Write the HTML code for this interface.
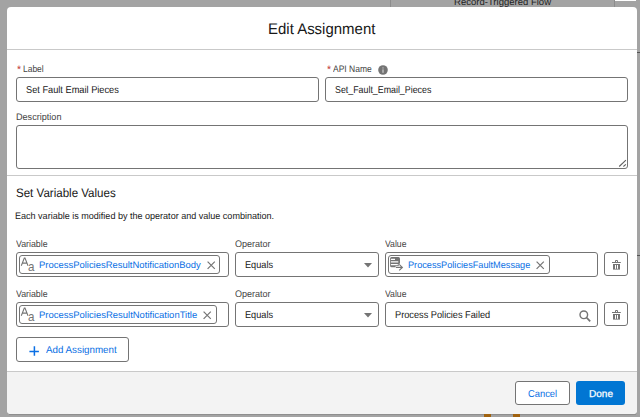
<!DOCTYPE html>
<html><head><meta charset="utf-8">
<style>
*{box-sizing:border-box;margin:0;padding:0}
html,body{width:640px;height:417px;overflow:hidden;background:#a3a3a3;font-family:"Liberation Sans",sans-serif;color:#181818;position:relative}
.a{position:absolute;white-space:nowrap;line-height:1}
.t{position:absolute;white-space:nowrap;line-height:1;transform-origin:0 0;text-rendering:geometricPrecision}
.box{position:absolute;border:1px solid #747474;border-radius:3px;background:#fff}
svg{position:absolute;overflow:visible}
</style></head><body>
<div class="a" style="left:390px;top:0;width:1px;height:7px;background:#8c8c8c"></div>
<div class="a" style="left:614px;top:0;width:1px;height:7px;background:#8c8c8c"></div>
<div class="t" style="left:453.64px;top:-3px;font-size:9.4px;color:#222;transform:scaleX(1.016);">Record-Triggered Flow</div>

<div class="a" style="left:615px;top:0;width:21px;height:1px;background:#fff"></div>
<div class="a" style="left:637px;top:52px;width:3px;height:1px;background:#555"></div>
<div class="a" style="left:637px;top:255px;width:3px;height:1px;background:#555"></div>
<div class="a" style="left:9px;top:414px;width:627px;height:1px;background:#8e8e8e"></div>
<div class="a" style="left:484px;top:414px;width:7px;height:3px;background:#a0620f"></div>
<div class="a" style="left:513px;top:414px;width:7px;height:3px;background:#a0620f"></div>

<div class="a" style="left:7px;top:7px;width:630px;height:407px;background:#fff;border-radius:4px;overflow:hidden">
  <div class="a" style="left:0;top:42px;width:630px;height:1px;background:#c9c9c9"></div>
  <div class="a" style="left:0;top:168px;width:630px;height:1px;background:#c9c9c9"></div>
  <div class="a" style="left:0;top:364px;width:630px;height:43px;background:#f3f3f3;border-top:1px solid #c9c9c9"></div>
</div>

<svg style="left:378px;top:65px" width="10" height="10" viewBox="0 0 10 10"><circle cx="5" cy="5" r="4.8" fill="#747474"/><rect x="4.4" y="4.4" width="1.2" height="3.4" fill="#d0d0d0"/><circle cx="5" cy="2.9" r="0.65" fill="#d0d0d0"/></svg>
<div class="box" style="left:16px;top:77px;width:303px;height:25px;"></div>
<div class="box" style="left:325px;top:77px;width:303px;height:25px;"></div>
<div class="box" style="left:16px;top:125px;width:612px;height:44px;"></div>

<svg style="left:618px;top:159px" width="10" height="9"><path d="M1.2 7.5 L7.9 1.2 M5.4 7.5 L7.9 5.3" stroke="#606060" stroke-width="1.1" fill="none"/></svg>

<div class="box" style="left:16px;top:252px;width:213px;height:25px;"></div>
<div class="box" style="left:19px;top:255px;width:201px;height:19px;"></div>
<svg style="left:20px;top:256px" width="16" height="16"><path d="M1.3 9.7 L4.3 2.0 H5.0 L8.0 9.7 M2.5 7.1 H6.8" stroke="#747474" stroke-width="1.05" fill="none"/><text x="8.1" y="15.0" font-family="Liberation Sans" font-size="12.5" fill="#747474" transform="scale(0.93 1)" style="transform-origin:8px 0">a</text></svg>
<svg style="left:207px;top:261px" width="9" height="9"><path d="M0.6 0.6 L7.8 7.8 M7.8 0.6 L0.6 7.8" stroke="#747474" stroke-width="1.2"/></svg>

<div class="box" style="left:235px;top:252px;width:144px;height:25px;"></div>
<svg style="left:364px;top:263px" width="9" height="5"><path d="M0 0 L8 0 L4 4.6 Z" fill="#747474"/></svg>

<div class="box" style="left:385px;top:252px;width:213px;height:25px;"></div>
<div class="box" style="left:388px;top:255px;width:162px;height:19px;"></div>

<svg style="left:389px;top:256px" width="16" height="16"><rect x="1.1" y="1.1" width="9.9" height="10.1" rx="1.5" fill="#747474"/><path d="M1.9 3.4 H6 M1.9 5.9 H9.3 M1.9 8.6 H8.8" stroke="#fff" stroke-width="1.2"/><path d="M6.6 11.4 H13.8 M10.2 8.1 L13.6 11.4 L10.2 14.6" stroke="#fff" stroke-width="2.8" fill="none"/><path d="M6.9 11.4 H13.6 M10.2 8.3 L13.4 11.4 L10.2 14.4" stroke="#747474" stroke-width="1.1" fill="none"/></svg>
<svg style="left:536px;top:261px" width="9" height="9"><path d="M0.6 0.6 L7.8 7.8 M7.8 0.6 L0.6 7.8" stroke="#747474" stroke-width="1.2"/></svg>

<div class="box" style="left:604px;top:252px;width:24px;height:24px;"></div>
<svg style="left:611px;top:259px" width="11" height="12"><path d="M4.5 3 V1.5 H6.5 V3" stroke="#747474" stroke-width="1" fill="none"/><path d="M1 3.5 H9.8" stroke="#747474" stroke-width="1" fill="none"/><path d="M2 5 H9 V10.6 H2 Z" fill="#747474"/><path d="M4.5 6 V9.8 M6.5 6 V9.8" stroke="#fff" stroke-width="1"/></svg>


<div class="box" style="left:16px;top:302px;width:213px;height:25px;"></div>
<div class="box" style="left:19px;top:305px;width:198px;height:19px;"></div>
<svg style="left:20px;top:306px" width="16" height="16"><path d="M1.3 9.7 L4.3 2.0 H5.0 L8.0 9.7 M2.5 7.1 H6.8" stroke="#747474" stroke-width="1.05" fill="none"/><text x="8.1" y="15.0" font-family="Liberation Sans" font-size="12.5" fill="#747474" transform="scale(0.93 1)" style="transform-origin:8px 0">a</text></svg>
<svg style="left:203px;top:311px" width="9" height="9"><path d="M0.6 0.6 L7.8 7.8 M7.8 0.6 L0.6 7.8" stroke="#747474" stroke-width="1.2"/></svg>

<div class="box" style="left:235px;top:302px;width:144px;height:25px;"></div>
<svg style="left:364px;top:313px" width="9" height="5"><path d="M0 0 L8 0 L4 4.6 Z" fill="#747474"/></svg>

<div class="box" style="left:385px;top:302px;width:213px;height:25px;"></div>

<svg style="left:578px;top:309px" width="14" height="14"><circle cx="5.8" cy="5.8" r="3.8" stroke="#747474" stroke-width="1.4" fill="none"/><path d="M8.5 8.5 L12.2 12.4" stroke="#747474" stroke-width="1.8"/></svg>
<div class="box" style="left:604px;top:302px;width:24px;height:24px;"></div>
<svg style="left:611px;top:309px" width="11" height="12"><path d="M4.5 3 V1.5 H6.5 V3" stroke="#747474" stroke-width="1" fill="none"/><path d="M1 3.5 H9.8" stroke="#747474" stroke-width="1" fill="none"/><path d="M2 5 H9 V10.6 H2 Z" fill="#747474"/><path d="M4.5 6 V9.8 M6.5 6 V9.8" stroke="#fff" stroke-width="1"/></svg>


<div class="box" style="left:16px;top:337px;width:113px;height:25px;"></div>

<svg style="left:0;top:0" width="1" height="1"><path d="M34.4 346.3 V355.8 M29.4 351.4 H38.9" stroke="#0a6fe4" stroke-width="1.5"/></svg>
<div class="box" style="left:515px;top:381px;width:55px;height:24px;"></div>

<div class="a" style="left:576px;top:381px;width:49px;height:24px;background:#0176d3;border-radius:3px"></div>
<div class="t" style="left:267.90px;top:22px;font-size:15.4px;color:#181818;transform:scaleX(0.973);">Edit Assignment</div>
<div class="t" style="left:22.93px;top:65px;font-size:9.5px;color:#444444;transform:scaleX(0.888);">Label</div>
<div class="t" style="left:17.39px;top:65px;font-size:11px;color:#c23934;transform:scaleX(0.935);">*</div>
<div class="t" style="left:332.50px;top:65px;font-size:9.5px;color:#444444;transform:scaleX(0.894);">API Name</div>
<div class="t" style="left:326.79px;top:65px;font-size:11px;color:#c23934;transform:scaleX(0.935);">*</div>
<div class="t" style="left:25.54px;top:86px;font-size:10.0px;color:#181818;transform:scaleX(0.923);">Set Fault Email Pieces</div>
<div class="t" style="left:334.76px;top:86px;font-size:10.0px;color:#181818;transform:scaleX(0.884);">Set_Fault_Email_Pieces</div>
<div class="t" style="left:15.77px;top:113px;font-size:9.5px;color:#444444;transform:scaleX(0.957);">Description</div>
<div class="t" style="left:15.62px;top:187px;font-size:12.3px;color:#181818;transform:scaleX(0.939);">Set Variable Values</div>
<div class="t" style="left:15.28px;top:212px;font-size:9.45px;color:#181818;transform:scaleX(0.957);">Each variable is modified by the operator and value combination.</div>
<div class="t" style="left:15.91px;top:240px;font-size:9.5px;color:#444444;transform:scaleX(0.925);">Variable</div>
<div class="t" style="left:235.05px;top:240px;font-size:9.5px;color:#444444;transform:scaleX(0.950);">Operator</div>
<div class="t" style="left:385.16px;top:240px;font-size:9.5px;color:#444444;transform:scaleX(0.910);">Value</div>
<div class="t" style="left:15.91px;top:290px;font-size:9.5px;color:#444444;transform:scaleX(0.925);">Variable</div>
<div class="t" style="left:235.05px;top:290px;font-size:9.5px;color:#444444;transform:scaleX(0.950);">Operator</div>
<div class="t" style="left:385.16px;top:290px;font-size:9.5px;color:#444444;transform:scaleX(0.910);">Value</div>
<div class="t" style="left:38.84px;top:260px;font-size:9.4px;color:#0a6fe4;transform:scaleX(1.008);">ProcessPoliciesResultNotificationBody</div>
<div class="t" style="left:408.06px;top:260px;font-size:9.4px;color:#0a6fe4;transform:scaleX(0.978);">ProcessPoliciesFaultMessage</div>
<div class="t" style="left:38.84px;top:310px;font-size:9.4px;color:#0a6fe4;transform:scaleX(1.011);">ProcessPoliciesResultNotificationTitle</div>
<div class="t" style="left:244.77px;top:261px;font-size:10.0px;color:#181818;transform:scaleX(0.918);">Equals</div>
<div class="t" style="left:244.77px;top:311px;font-size:10.0px;color:#181818;transform:scaleX(0.918);">Equals</div>
<div class="t" style="left:394.66px;top:311px;font-size:10.0px;color:#181818;transform:scaleX(0.921);">Process Policies Failed</div>
<div class="t" style="left:46.00px;top:346px;font-size:10.0px;color:#0a6fe4;transform:scaleX(0.978);">Add Assignment</div>
<div class="t" style="left:528.13px;top:390px;font-size:10.0px;color:#0a6fe4;transform:scaleX(0.937);">Cancel</div>
<div class="t" style="left:588.60px;top:390px;font-size:10.0px;color:#ffffff;transform:scaleX(1.004);-webkit-text-stroke:0.25px #fff;">Done</div>

</body></html>
